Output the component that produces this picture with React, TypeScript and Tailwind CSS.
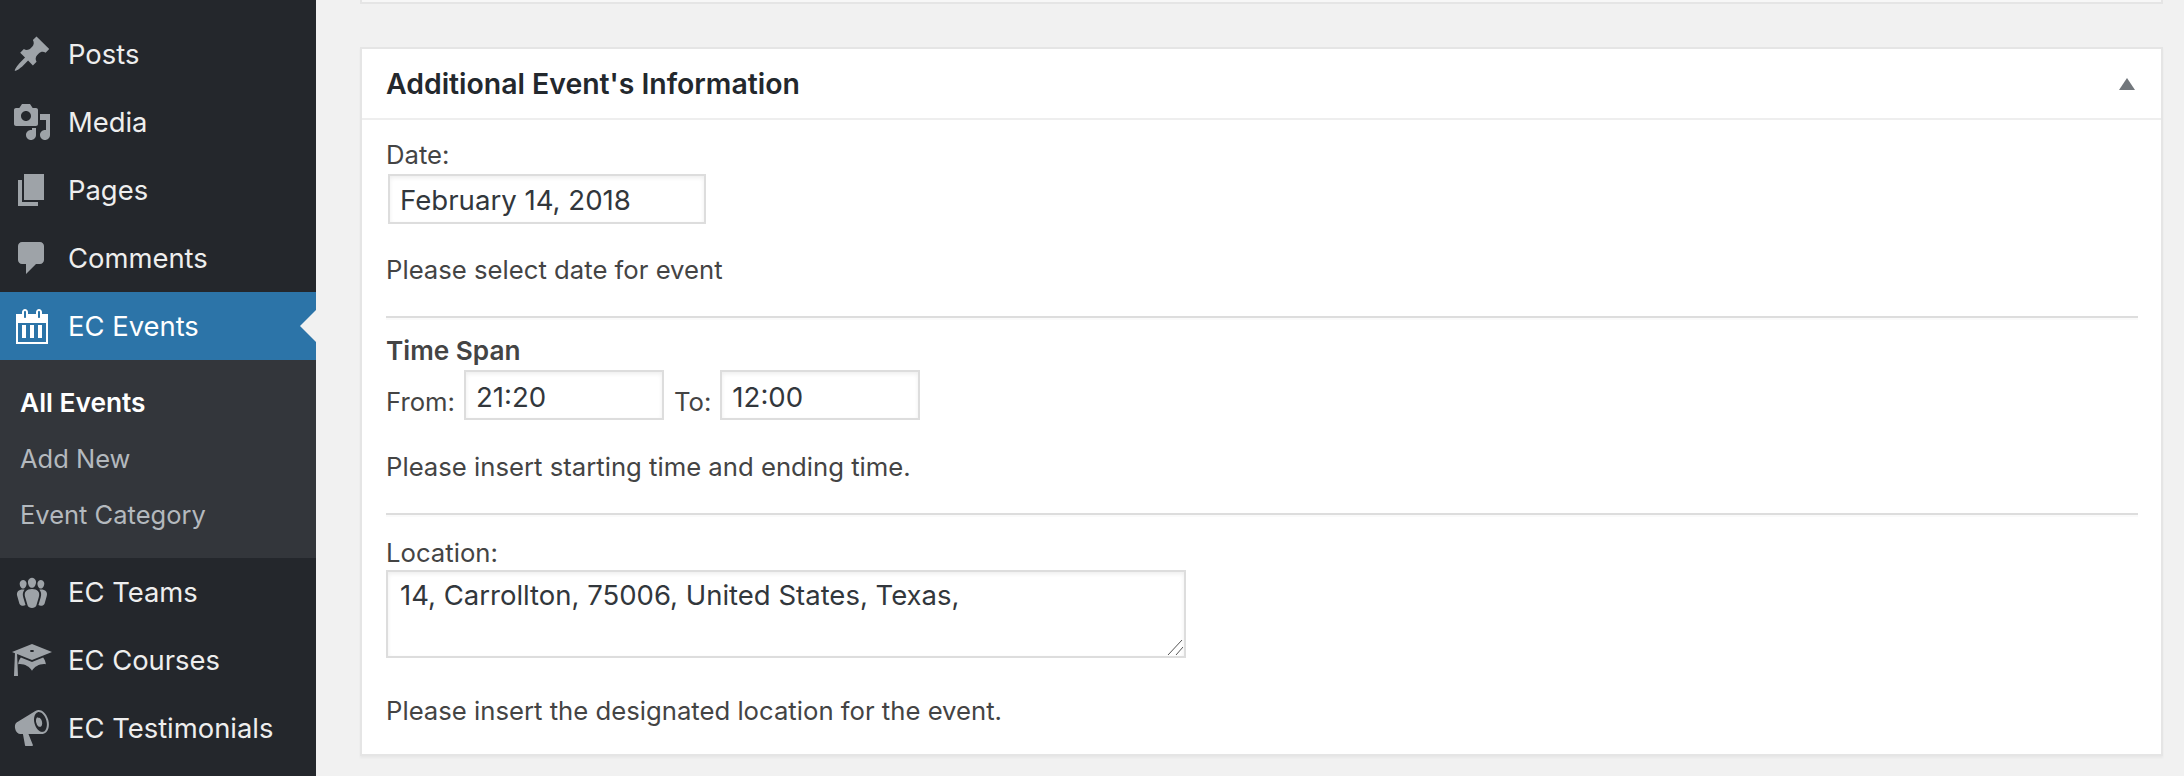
import React from 'react';

const font = { fontFamily: 'Inter, "Liberation Sans", sans-serif' };

const Icon = ({ d, className = 'fill-[#9ea3a8]' }: { d: string; className?: string }) => (
  <svg viewBox="0 0 20 20" className={`w-10 h-10 shrink-0 ${className}`}>
    <path d={d} fillRule="evenodd" />
  </svg>
);

const icons = {
  posts:
    'M10.44 3.02l1.82-1.82 6.36 6.35-1.83 1.82c-1.05-.68-2.48-.57-3.41.36l-.75.75c-.92.93-1.04 2.35-.35 3.41l-1.83 1.82-2.41-2.41-2.8 2.79c-.42.42-3.38 2.71-3.8 2.29s1.86-3.39 2.28-3.81l2.79-2.79L4.1 9.36l1.83-1.82c1.05.69 2.48.57 3.41-.36l.75-.75c.93-.92 1.04-2.35.35-3.41z',
  media:
    'M13 11V4c0-.55-.45-1-1-1h-1.67L9 1H5L3.67 3H2c-.55 0-1 .45-1 1v7c0 .55.45 1 1 1h10c.55 0 1-.45 1-1zM7 4.5c1.38 0 2.5 1.12 2.5 2.5S8.38 9.5 7 9.5 4.5 8.38 4.5 7 5.62 4.5 7 4.5zM14 6h5v10.5c0 1.38-1.12 2.5-2.5 2.5S14 17.88 14 16.5s1.12-2.5 2.5-2.5c.17 0 .34.02.5.05V9h-3V6zm-4 8.05V13h2v3.5c0 1.38-1.12 2.5-2.5 2.5S7 17.88 7 16.5 8.12 14 9.5 14c.17 0 .34.02.5.05z',
  pages: 'M6 15V2h10v13H6zm-1 1h8v2H3V5h2v11z',
  comments: 'M5 2h9c1.1 0 2 .9 2 2v7c0 1.1-.9 2-2 2h-2l-5 5v-5H5c-1.1 0-2-.9-2-2V4c0-1.1.9-2 2-2z',
  events:
    'M15 4h3v15H2V4h3V3c0-.41.15-.76.44-1.06.29-.29.65-.44 1.06-.44s.77.15 1.06.44c.29.3.44.65.44 1.06v1h4V3c0-.41.15-.76.44-1.06.29-.29.65-.44 1.06-.44s.77.15 1.06.44c.29.3.44.65.44 1.06v1zM6 3v2.5c0 .14.05.26.15.36.09.09.21.14.35.14s.26-.05.35-.14c.1-.1.15-.22.15-.36V3c0-.14-.05-.26-.15-.35-.09-.1-.21-.15-.35-.15s-.26.05-.35.15c-.1.09-.15.21-.15.35zm7 0v2.5c0 .14.05.26.14.36.1.09.22.14.36.14s.26-.05.36-.14c.09-.1.14-.22.14-.36V3c0-.14-.05-.26-.14-.35-.1-.1-.22-.15-.36-.15s-.26.05-.36.15c-.09.09-.14.21-.14.35zM17 18V8.5H3V18h14zM5 9.5h2V16H5zM9 9.5h2V16H9zM13 9.5h2V16h-2z',
  teams:
    'M8.03 4.46c-.29 1.28.55 3.46 1.97 3.46 1.41 0 2.25-2.18 1.96-3.46-.22-.98-1.08-1.63-1.96-1.63-.89 0-1.74.65-1.97 1.63zm-4.13.9c-.25 1.08.47 2.93 1.67 2.93s1.92-1.85 1.67-2.93c-.19-.83-.92-1.39-1.67-1.39s-1.48.56-1.67 1.39zm8.86 0c-.25 1.08.47 2.93 1.66 2.93 1.2 0 1.92-1.85 1.67-2.93-.19-.83-.92-1.39-1.67-1.39-.74 0-1.47.56-1.66 1.39zm-.59 11.43l1.25-4.3C14.2 10 12.71 8.47 10 8.47c-2.72 0-4.21 1.53-3.44 4.02l1.26 4.3C8.05 17.51 9 18 10 18c.98 0 1.94-.49 2.17-1.21zm-6.1-7.63c-.49.67-.96 1.83-.42 3.59l1.12 3.79c-.34.2-.77.31-1.2.31-.85 0-1.65-.41-1.85-1.03l-1.07-3.65c-.65-2.11.61-3.4 2.92-3.4.27 0 .54.02.79.06-.1.1-.2.22-.29.33zm8.35-.39c2.31 0 3.58 1.29 2.92 3.4l-1.07 3.65c-.2.62-1 1.03-1.85 1.03-.43 0-.86-.11-1.2-.31l1.11-3.79c.55-1.76.08-2.92-.42-3.59-.08-.11-.18-.23-.28-.33.25-.04.51-.06.79-.06z',
  courses:
    'M10 10L2.54 7.02 3 18H1l.48-11.41L0 6l10-4 10 4zm0-5c-.55 0-1 .22-1 .5s.45.5 1 .5 1-.22 1-.5-.45-.5-1-.5zm0 6l5.57-2.23c.71.94 1.2 2.07 1.36 3.3-.3-.04-.61-.07-.93-.07-2.55 0-4.78 1.37-6 3.41C8.78 13.37 6.55 12 4 12c-.32 0-.63.03-.93.07.16-1.23.65-2.36 1.36-3.3z',
  testimonials:
    'M18.15 5.94c.46 1.62.38 3.22-.02 4.48-.42 1.28-1.26 2.18-2.3 2.48-.16.06-.26.06-.4.06-.06.02-.12.02-.18.02-.06.02-.14.02-.22.02h-6.8l2.22 5.5c.02.14-.06.26-.14.34-.08.1-.24.16-.34.16H6.95c-.1 0-.26-.06-.34-.16-.08-.08-.16-.2-.14-.34l-1-5.5H4.25l-.02-.02c-.5.06-1.08-.18-1.54-.62s-.88-1.08-1.06-1.88c-.24-.8-.2-1.56-.02-2.2.18-.62.58-1.08 1.06-1.3l.02-.02 9-5.4c.1-.06.18-.1.24-.16.06-.04.14-.08.24-.12.16-.08.28-.12.5-.18 1.04-.3 2.24.1 3.22 1 .98.88 1.8 2.24 2.26 3.86zm-2.58 5.98h-.02c.4-.1.74-.34 1.04-.7.58-.7.86-1.76.86-3.04-.02-.64-.1-1.3-.28-1.98-.34-1.36-1.02-2.5-1.78-3.24s-1.68-1.1-2.46-.88c-.82.22-1.4.96-1.7 2-.32 1.04-.28 2.36.06 3.72.38 1.36 1 2.5 1.8 3.24.78.74 1.62 1.1 2.48.88zm-2.54-7.08c.22-.04.42-.02.62.04.38.16.76.48 1.02 1s.42 1.2.42 1.78c0 .3-.04.56-.12.8-.18.48-.44.84-.86.94-.34.1-.8-.06-1.14-.4-.34-.36-.66-.88-.78-1.54-.24-.64-.24-1.32-.12-1.82.12-.52.42-.9.86-.96z',
};

const MenuItem = ({ icon, label }: { icon: string; label: string }) => (
  <div className="h-[68px] flex items-center gap-4 pl-3 text-[27.4px] text-[#eeeeee]">
    <Icon d={icon} />
    <span className="pt-[2px]">{label}</span>
  </div>
);

const inputClass =
  'h-[50px] border-2 border-[#dddddd] bg-white px-[10px] text-[27.6px] text-[#32373c] outline-none shadow-[inset_0_2px_4px_rgba(0,0,0,0.07)]';

const Divider = ({ className }: { className: string }) => (
  <div className={`h-[2px] bg-[#dddddd] mr-[23px] shadow-[0_2px_0_#fafafa] ${className}`} />
);

export default function App() {
  return (
    <div className="w-[2184px] h-[776px] flex bg-[#f1f1f1] overflow-hidden" style={font}>
      {/* Sidebar */}
      <aside className="w-[316px] shrink-0 bg-[#24272c] pt-5">
        <MenuItem icon={icons.posts} label="Posts" />
        <MenuItem icon={icons.media} label="Media" />
        <MenuItem icon={icons.pages} label="Pages" />
        <MenuItem icon={icons.comments} label="Comments" />
        <div className="relative h-[68px] flex items-center gap-4 pl-3 bg-[#2c74a8] text-[27.4px] text-white">
          <Icon d={icons.events} className="fill-white" />
          <span className="pt-[2px]">EC Events</span>
          <div className="absolute right-0 top-[18px] border-y-[16px] border-r-[16px] border-y-transparent border-r-[#f1f1f1]" />
        </div>
        <div className="h-[198px] bg-[#33363b] pt-[15px] pl-[20px] text-[25.5px] text-[#b4b9be]">
          <div className="h-[56px] flex items-center text-[26.3px] font-semibold text-white">All Events</div>
          <div className="h-[56px] flex items-center">Add New</div>
          <div className="h-[56px] flex items-center">Event Category</div>
        </div>
        <MenuItem icon={icons.teams} label="EC Teams" />
        <MenuItem icon={icons.courses} label="EC Courses" />
        <MenuItem icon={icons.testimonials} label="EC Testimonials" />
      </aside>

      {/* Main content */}
      <main className="flex-1 pl-[44px] pr-[21px]">
        <div className="h-1 bg-[#f7f7f7] border-b-2 border-x-2 border-[#e5e5e5]" />

        <section className="mt-[43px] h-[709px] bg-white border-2 border-[#e5e5e5] shadow-[0_2px_2px_rgba(0,0,0,0.04)]">
          <header className="h-[71px] border-b-2 border-[#eeeeee] flex items-center justify-between pl-[24px] pr-[26px]">
            <h2 className="pt-[2px] text-[28.4px] font-semibold text-[#23282d]">Additional Event's Information</h2>
            <div className="border-x-[8px] border-b-[12px] border-x-transparent border-b-[#72777c]" />
          </header>

          <div className="pl-[24px] text-[25.7px] leading-[36px] text-[#444444]">
            <div className="mt-[17px]">Date:</div>
            <input readOnly value="February 14, 2018" className={`mt-[1px] ml-[2px] w-[318px] block pt-[2px] ${inputClass}`} />
            <p className="mt-[28px]">Please select date for event</p>
            <Divider className="mt-[28px]" />

            <div className="mt-[15px] font-semibold text-[26.2px]">Time Span</div>
            <div className="mt-[1px] flex items-end">
              <span>From:</span>
              <input readOnly value="21:20" className={`ml-[9px] w-[200px] pt-[3px] ${inputClass}`} />
              <span className="ml-[10px]">To:</span>
              <input readOnly value="12:00" className={`ml-[9px] w-[200px] pt-[3px] ${inputClass}`} />
            </div>
            <p className="mt-[29px]">Please insert starting time and ending time.</p>
            <Divider className="mt-[28px]" />

            <div className="mt-[20px] h-[35px]">Location:</div>
            <div className="relative w-[800px] h-[88px]">
              <textarea
                readOnly
                defaultValue="14, Carrollton, 75006, United States, Texas,"
                className="block w-full h-full resize-none border-2 border-[#dddddd] bg-white px-[12px] py-[5px] text-[27.5px] leading-[36px] text-[#32373c] outline-none shadow-[inset_0_2px_4px_rgba(0,0,0,0.07)]"
              />
              <svg viewBox="0 0 16 16" className="absolute right-[3px] bottom-[3px] w-4 h-4 stroke-[#555555]">
                <path d="M1 16L15 1M9 16l7-8" fill="none" strokeWidth="1" />
              </svg>
            </div>
            <p className="mt-[35px]">Please insert the designated location for the event.</p>
          </div>
        </section>
      </main>
    </div>
  );
}
